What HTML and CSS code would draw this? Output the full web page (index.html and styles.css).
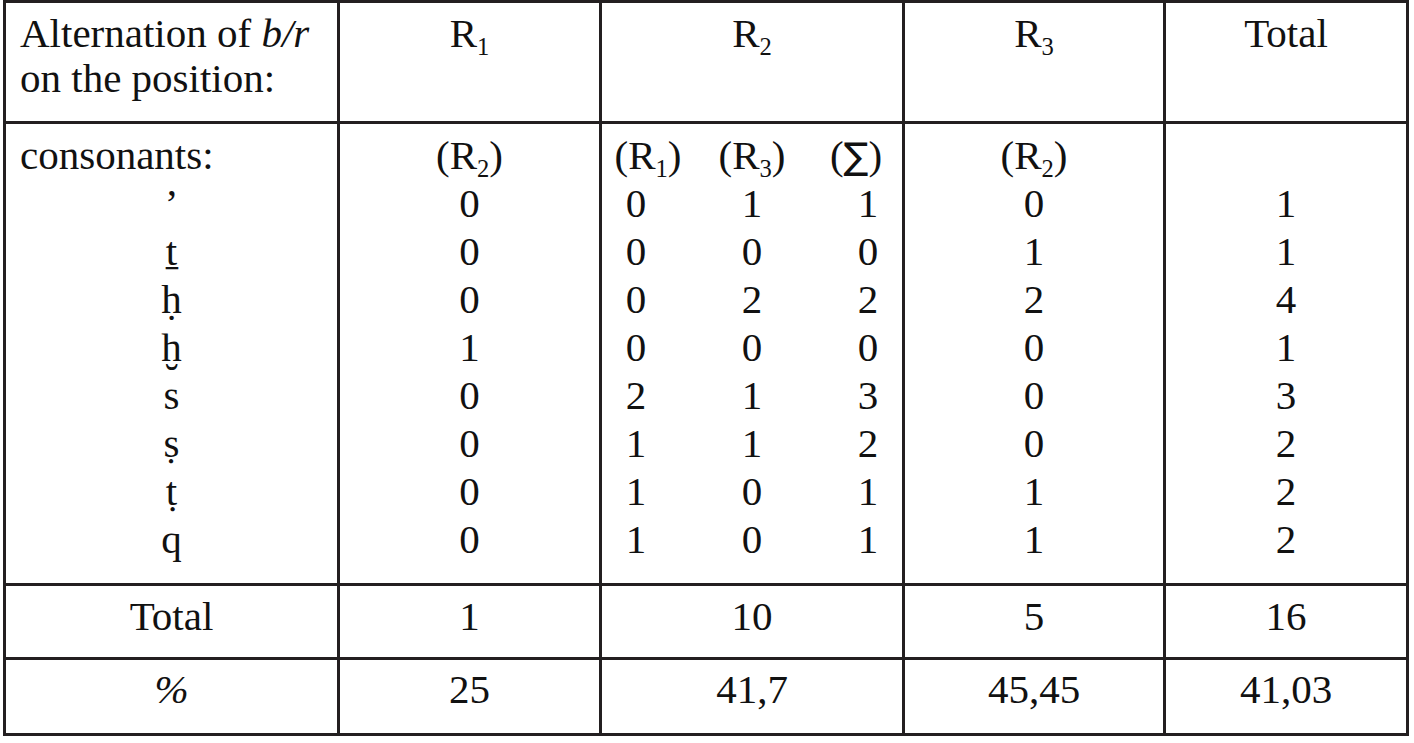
FILE: index.html
```html
<!DOCTYPE html>
<html lang="en">
  <head>
    <meta charset="UTF-8" />
    <title>Alternation of b/r</title>
    <link rel="stylesheet" href="styles.css">
  </head>
  <body>
    <table class="alt">
      <thead>
        <tr>
          <th class="first">Alternation of <i>b/r</i><br />on the position:</th>
          <th>R<sub>1</sub></th>
          <th>R<sub>2</sub></th>
          <th>R<sub>3</sub></th>
          <th>Total</th>
        </tr>
      </thead>
      <tbody>
        <tr class="data">
          <td class="first">
            <div class="label">consonants:</div>
            <div class="cons">&#8217;<br />&#7791;<br />&#7717;<br />&#7723;<br />s<br />&#7779;<br />&#7789;<br />q</div>
          </td>
          <td>(R<sub>2</sub>)<br />0<br />0<br />0<br />1<br />0<br />0<br />0<br />0</td>
          <td>
            <div class="split">
              <div class="sub-head">(R<sub>1</sub>)</div>
              <div class="sub-head">(R<sub>3</sub>)</div>
              <div class="sub-head">(<span class="sigma">&#8721;</span>)</div>
              <div class="d1">0<br />0<br />0<br />0<br />2<br />1<br />1<br />1</div>
              <div class="d2">1<br />0<br />2<br />0<br />1<br />1<br />0<br />0</div>
              <div class="d3">1<br />0<br />2<br />0<br />3<br />2<br />1<br />1</div>
            </div>
          </td>
          <td>(R<sub>2</sub>)<br />0<br />1<br />2<br />0<br />0<br />0<br />1<br />1</td>
          <td>&nbsp;<br />1<br />1<br />4<br />1<br />3<br />2<br />2<br />2</td>
        </tr>
        <tr class="sum">
          <td>Total</td>
          <td>1</td>
          <td>10</td>
          <td>5</td>
          <td>16</td>
        </tr>
        <tr class="pct">
          <td><i>%</i></td>
          <td>25</td>
          <td>41,7</td>
          <td>45,45</td>
          <td>41,03</td>
        </tr>
      </tbody>
    </table>
  </body>
</html>
```

FILE: styles.css
```css
body {
  margin: 0;
  padding: 0 0 0 3px;
  background: #fff;
  color: #111;
  font-family: "Liberation Serif", "Times New Roman", serif;
  font-size: 41px;
}
.alt {
  table-layout: fixed;
  width: 1406px;
  border-collapse: separate;
  border-spacing: 0;
  border-top: 3px solid #231f20;
  border-left: 3px solid #231f20;
}
.alt th,
.alt td {
  box-sizing: border-box;
  border-right: 3px solid #231f20;
  border-bottom: 3px solid #231f20;
  padding: 0;
  text-align: center;
  vertical-align: top;
  font-weight: normal;
  line-height: 48px;
}
.alt th:nth-child(1) { width: 334px; }
.alt th:nth-child(2) { width: 262px; }
.alt th:nth-child(3) { width: 303px; }
.alt th:nth-child(4) { width: 261px; }
.alt th:nth-child(5) { width: 243px; }

.alt thead th {
  padding: 8px 0 20px;
  line-height: 45px;
}
.alt thead th.first {
  text-align: left;
  padding-left: 14px;
  white-space: nowrap;
}
sub {
  font-size: 0.6em;
  line-height: 0;
  vertical-align: -0.32em;
}

.alt .data td {
  padding: 7px 0 20px;
}
.label {
  text-align: left;
  padding-left: 14px;
}
.split {
  display: grid;
  grid-template-columns: 92px 116px 92px;
}
.d1 {
  padding-right: 24px;
}
.d3 {
  padding-left: 24px;
}
.sub-head {
  height: 48px;
  white-space: nowrap;
}
.sigma {
  font-family: "DejaVu Sans", sans-serif;
  font-size: 0.9em;
  line-height: 0;
}

.alt .sum td {
  padding: 6px 0 17px;
}
.alt .pct td {
  padding: 5px 0 20px;
}
```
